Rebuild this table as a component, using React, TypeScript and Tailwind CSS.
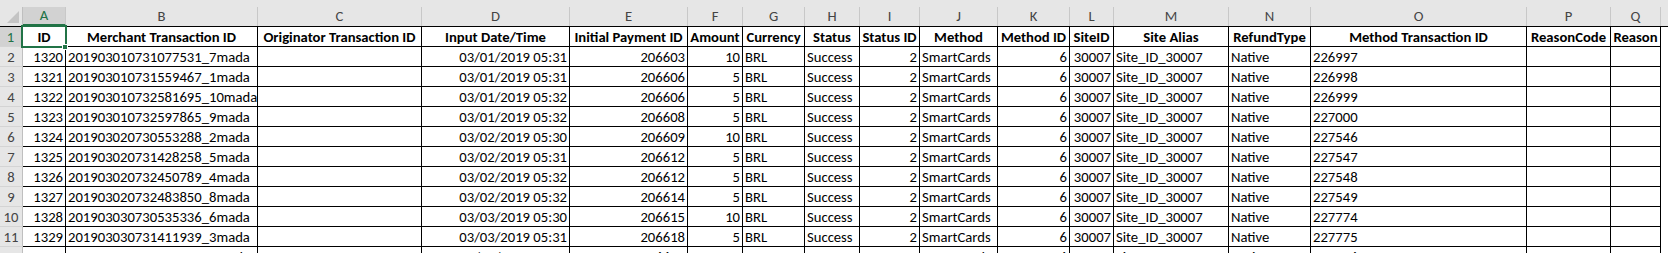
import React from "react";

const columns = [
  { letter: "A", w: "w-[43px]", title: "ID", align: "right" },
  { letter: "B", w: "w-[192px]", title: "Merchant Transaction ID", align: "left" },
  { letter: "C", w: "w-[164px]", title: "Originator Transaction ID", align: "left" },
  { letter: "D", w: "w-[148px]", title: "Input Date/Time", align: "right" },
  { letter: "E", w: "w-[118px]", title: "Initial Payment ID", align: "right" },
  { letter: "F", w: "w-[55px]", title: "Amount", align: "right" },
  { letter: "G", w: "w-[62px]", title: "Currency", align: "left" },
  { letter: "H", w: "w-[55px]", title: "Status", align: "left" },
  { letter: "I", w: "w-[60px]", title: "Status ID", align: "right" },
  { letter: "J", w: "w-[78px]", title: "Method", align: "left" },
  { letter: "K", w: "w-[72px]", title: "Method ID", align: "right" },
  { letter: "L", w: "w-[44px]", title: "SiteID", align: "right" },
  { letter: "M", w: "w-[115px]", title: "Site Alias", align: "left" },
  { letter: "N", w: "w-[82px]", title: "RefundType", align: "left" },
  { letter: "O", w: "w-[216px]", title: "Method Transaction ID", align: "left" },
  { letter: "P", w: "w-[84px]", title: "ReasonCode", align: "left" },
  { letter: "Q", w: "w-[50px]", title: "Reason", align: "left" },
];

const raw: [string, string, string, string, string, string][] = [
  ["1320", "201903010731077531_7mada", "03/01/2019 05:31", "206603", "10", "226997"],
  ["1321", "201903010731559467_1mada", "03/01/2019 05:31", "206606", "5", "226998"],
  ["1322", "201903010732581695_10mada", "03/01/2019 05:32", "206606", "5", "226999"],
  ["1323", "201903010732597865_9mada", "03/01/2019 05:32", "206608", "5", "227000"],
  ["1324", "201903020730553288_2mada", "03/02/2019 05:30", "206609", "10", "227546"],
  ["1325", "201903020731428258_5mada", "03/02/2019 05:31", "206612", "5", "227547"],
  ["1326", "201903020732450789_4mada", "03/02/2019 05:32", "206612", "5", "227548"],
  ["1327", "201903020732483850_8mada", "03/02/2019 05:32", "206614", "5", "227549"],
  ["1328", "201903030730535336_6mada", "03/03/2019 05:30", "206615", "10", "227774"],
  ["1329", "201903030731411939_3mada", "03/03/2019 05:31", "206618", "5", "227775"],
  ["1330", "201903030732145570_9mada", "03/03/2019 05:32", "206619", "5", "227776"],
];

const rows = raw.map(([id, merchant, date, payment, amount, methodTx]) => [
  id, merchant, "", date, payment, amount, "BRL", "Success", "2",
  "SmartCards", "6", "30007", "Site_ID_30007", "Native", methodTx, "", "",
]);

const font = "font-['Carlito','Calibri','Lato',sans-serif]";

const App = () => {
  return (
    <div className={`w-[1668px] h-[253px] overflow-hidden bg-white text-black ${font} text-[14.67px] leading-none`}>
      {/* strip under the formula bar */}
      <div className="h-[7px] bg-[#e6e6e6]" />

      {/* column letters */}
      <div className="flex h-[19px] bg-[#e6e6e6] text-[#444]">
        <div className="w-[23px] shrink-0 border-r border-[#bfbfbf] relative">
          <svg className="absolute right-[3px] bottom-[3px]" width="12" height="12" viewBox="0 0 12 12">
            <polygon points="12,0 12,12 0,12" fill="#c4c4c4" />
          </svg>
        </div>
        {columns.map((c, i) => (
          <div
            key={c.letter}
            className={`${c.w} shrink-0 flex items-center justify-center border-r border-[#c8c8c8] ${
              i === 0 ? "bg-[#d2d2d2] text-[#217346] border-b-2 border-b-[#217346]" : ""
            }`}
          >
            {c.letter}
          </div>
        ))}
        <div className="flex-1" />
      </div>

      <div className="relative border-t border-black">
        {/* header row 1 */}
        <div className="flex h-[20px]">
          <div className="w-[23px] shrink-0 bg-[#d2d2d2] text-[#217346] border-r-2 border-r-[#217346] border-b border-b-[#d4d4d4] flex items-end justify-center pb-[1px]">
            1
          </div>
          {columns.map(c => (
            <div
              key={c.letter}
              className={`${c.w} shrink-0 border-r border-b border-black flex items-end justify-center pb-[1px] font-bold whitespace-nowrap overflow-hidden`}
            >
              {c.title}
            </div>
          ))}
        </div>

        {rows.map((row, r) => (
          <div key={r} className="flex h-[20px]">
            <div className="w-[23px] shrink-0 bg-[#e6e6e6] text-[#444] border-r border-[#bfbfbf] border-b border-b-[#d4d4d4] flex items-end justify-center pb-[1px]">
              {r + 2}
            </div>
            {columns.map((c, i) => (
              <div
                key={c.letter}
                className={`${c.w} shrink-0 border-r border-b border-black flex items-end pb-[1px] whitespace-nowrap ${
                  c.align === "right" ? "justify-end pr-[2px] overflow-hidden" : "justify-start pl-[2px]"
                }`}
              >
                {row[i]}
              </div>
            ))}
          </div>
        ))}

        {/* active cell A1 */}
        <div className="absolute left-[21px] top-[-2px] w-[46px] h-[23px] border-2 border-[#217346] pointer-events-none" />
        <div className="absolute left-[62px] top-[17px] w-[6px] h-[6px] bg-[#217346] border border-white" />
      </div>
    </div>
  );
};

export default App;
